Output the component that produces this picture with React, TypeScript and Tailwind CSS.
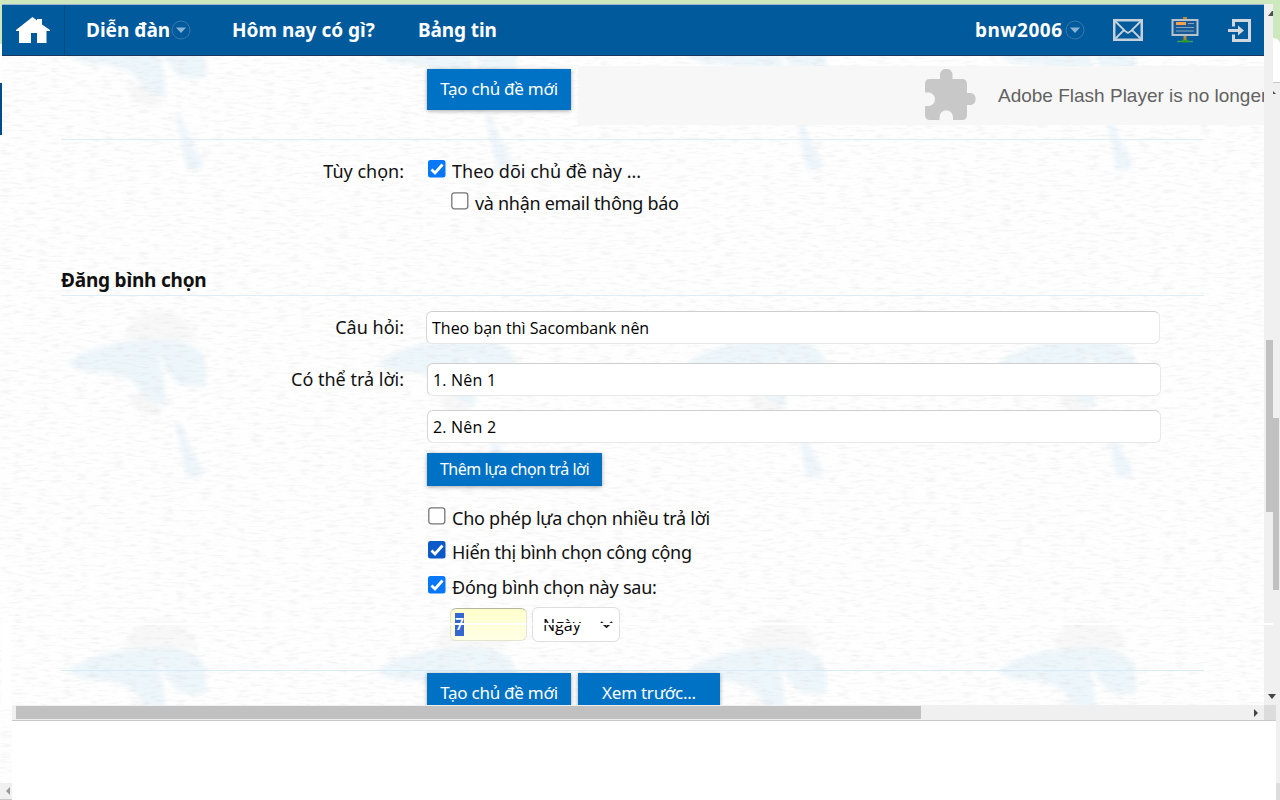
import type { ReactNode } from 'react';

function PaperBackground() {
  return (
    <svg className="absolute inset-0 h-[800px] w-[1280px]" viewBox="0 0 1280 800">
      <defs>
        <filter id="soft" x="-10%" y="-10%" width="120%" height="120%">
          <feGaussianBlur stdDeviation="2" />
        </filter>
        <filter id="paper" x="0" y="0" width="100%" height="100%">
          <feTurbulence type="fractalNoise" baseFrequency="0.08 0.4" numOctaves="3" seed="8" />
          <feColorMatrix values="0 0 0 0 0.5  0 0 0 0 0.5  0 0 0 0 0.5  0.45 0 0 0 -0.22" />
        </filter>
        <pattern id="logo" x="2" y="0" width="310" height="308" patternUnits="userSpaceOnUse">
          <g filter="url(#soft)">
            <path d="M122 32C126 14 139 4 158 3C178 4 191 14 194 32Z" fill="#f8f8f8" />
            <path d="M127 88C134 80 150 84 160 104C148 110 130 106 127 88Z" fill="#f7f7f7" />
            <path d="M66 55C82 40 120 32 150 32C190 29 205 44 204 60V77C196 79 184 79 176 75C168 68 162 56 157 45C158 56 163 68 164 98C155 97 144 92 138 82C130 70 115 66 98 64C84 65 72 61 66 55Z" fill="#edf6fa" />
            <path d="M172 114L179 114C184 134 196 152 202 163L198 170L185 170C180 152 178 132 172 114Z" fill="#eff6fb" />
          </g>
        </pattern>
      </defs>
      <rect width="1280" height="800" fill="#fefefe" />
      <rect width="1280" height="800" fill="url(#logo)" />
      <rect width="1280" height="800" filter="url(#paper)" />
    </svg>
  );
}

function MenuArrow() {
  return (
    <svg className="h-5 w-5 shrink-0" viewBox="0 0 20 20">
      <circle cx="10" cy="10" r="9" fill="none" stroke="#3a78ae" />
      <path d="M5 7.5H15L10 13Z" fill="#8db3d3" />
    </svg>
  );
}

interface CheckProps {
  checked?: boolean;
  dark?: boolean;
  children: ReactNode;
  className?: string;
}

function Check({ checked, dark, children, className = '' }: CheckProps) {
  return (
    <label className={`flex items-start whitespace-nowrap text-[18px] leading-6 ${className}`}>
      <svg className="mr-[6px] ml-px h-[18px] w-[18px] shrink-0" viewBox="0 0 18 18">
        {checked ? (
          <>
            <rect width="17.5" height="17.5" rx="2.5" fill={dark ? '#0a59c8' : '#0877f8'} />
            <path d="M3.5 9.5L7 13L14.5 4.5" fill="none" stroke="white" strokeWidth="2.8" />
          </>
        ) : (
          <rect x="0.8" y="0.8" width="16" height="16" rx="2.5" fill="white" stroke="#767676" strokeWidth="1.3" />
        )}
      </svg>
      <span className="-mt-px">{children}</span>
    </label>
  );
}

function Field({ children, className = '' }: { children: ReactNode; className?: string }) {
  return (
    <div
      className={`flex h-[33px] w-[734px] items-center rounded-md border border-[#e8e8e8] border-t-[#cfcfcf] border-l-[#d6d6d6] bg-white font-['Open_Sans',sans-serif] text-[16px] text-black ${className}`}
    >
      {children}
    </div>
  );
}

function Button({ children, className = '' }: { children: ReactNode; className?: string }) {
  return (
    <button
      className={`flex shrink-0 items-center justify-center whitespace-nowrap bg-[#0072c6] pb-px text-white shadow-[0_1px_4px_rgba(0,0,0,0.35)] ${className}`}
    >
      {children}
    </button>
  );
}

function Row({ label, children, className = '' }: { label?: ReactNode; children: ReactNode; className?: string }) {
  return (
    <div className={`flex shrink-0 ${className}`}>
      <div className="mr-[23px] w-[402px] shrink-0 whitespace-nowrap text-right text-[18px] leading-[33px]">{label}</div>
      {children}
    </div>
  );
}

function Header() {
  return (
    <header className="flex h-[52px] shrink-0 items-center border-t border-b border-t-[#9ab5d1] border-b-[#18395d] bg-[#005a9c] text-[19px] leading-[26px] font-bold text-white">
      <div className="flex h-full w-[63px] shrink-0 items-center border-r border-[#0a4b80] pl-[14px]">
        <svg className="h-[28px] w-[34px]" viewBox="0 0 34 28">
          <path d="M0 14L16.5 1L21 4.5V3H26V8.5L34 14V15H30.5V27H21V17H15V27H3V15H0Z" fill="white" />
        </svg>
      </div>
      <span className="mb-px ml-[21px] w-[85px] whitespace-nowrap">Diễn đàn</span>
      <MenuArrow />
      <span className="mb-px ml-[41px] w-[143px] whitespace-nowrap">Hôm nay có gì?</span>
      <span className="mb-px ml-[43px] whitespace-nowrap tracking-[-0.1px]">Bảng tin</span>
      <span className="mb-px ml-auto w-[90px] whitespace-nowrap tracking-[0.5px]">bnw2006</span>
      <MenuArrow />
      <svg className="ml-[28px] h-[22px] w-[30px]" viewBox="0 0 30 22" fill="none" stroke="#c6d0da" strokeWidth="2">
        <path d="M1 1H29V21H1Z" strokeWidth="3" />
        <path d="M2 2L12 12L15 14L18 12L28 2M2 20L11 11M28 20L19 11" strokeWidth="1.8" />
      </svg>
      <svg className="ml-[28px] h-[28px] w-[28px]" viewBox="0 0 28 28">
        <path d="M12 1H16V4H12ZM12.5 19H15.5V25H12.5Z" fill="#b98b2e" />
        <path d="M6 25.5H22" stroke="#3d9b5c" strokeWidth="1.5" />
        <path d="M11 25H17" stroke="#2f9c1f" strokeWidth="2.5" />
        <rect x="1.5" y="4" width="25" height="15" fill="#175a94" stroke="#b6c2cd" strokeWidth="2" />
        <path d="M5 7.5H15" stroke="#f59f50" strokeWidth="3" />
        <path d="M17 7.5H23M5 11.5H23M5 15H23" stroke="#7fa2c2" />
      </svg>
      <svg className="mr-[12px] ml-[28px] h-[25px] w-[25px]" viewBox="0 0 25 25" fill="none" stroke="#d2d7dd" strokeWidth="3">
        <path d="M6.5 8.5V2.5H22.5V22.5H6.5V16.5" />
        <path d="M1 12.5H12" />
        <path d="M11 7.5L17 12.5L11 17.5Z" fill="#d2d7dd" stroke="none" />
      </svg>
    </header>
  );
}

function FlashNotice() {
  return (
    <div className="ml-[7px] flex h-[59px] min-w-0 flex-1 items-center overflow-hidden bg-[#f7f7f7] pl-[347px]">
      <svg className="mb-px h-[52px] w-[52px] shrink-0" viewBox="0 0 52 52">
        <path
          d="M5 10H15V6A6.2 6.2 0 0 1 27.5 6V10H37Q42 10 42 15V24H46A6.2 6.2 0 0 1 46 36H42V46Q42 51 37 51H28V48A6.7 6.7 0 0 0 14.5 48V51H5Q0 51 0 46V37H4A6.8 6.8 0 0 0 4 23.5H0V15Q0 10 5 10Z"
          fill="#c8c8c8"
        />
      </svg>
      <span className="mt-[2px] ml-[21px] whitespace-nowrap font-['Liberation_Sans',sans-serif] text-[19px] text-[#626262]">
        Adobe Flash Player is no longer
      </span>
    </div>
  );
}

function PollForm() {
  return (
    <main className="flex h-[649px] flex-col overflow-hidden">
      <Row className="h-[83px] pt-[10px]">
        <Button className="mt-[3px] h-[41px] w-[144px] text-[17px] tracking-[-0.25px]">Tạo chủ đề mới</Button>
        <FlashNotice />
      </Row>
      <div className="ml-[59px] h-px w-[1143px] shrink-0 bg-[#dfedf5]" />
      <Row label="Tùy chọn:" className="mt-[15px] h-[110px]">
        <div className="flex flex-col pt-[5px]">
          <Check checked className="h-[32px]">Theo dõi chủ đề này ...</Check>
          <Check className="ml-[23px] tracking-[-0.3px]">và nhận email thông báo</Check>
        </div>
      </Row>
      <h2 className="ml-[59px] h-[31px] w-[1143px] shrink-0 border-b border-[#dfedf5] text-[19px] leading-[31px] font-bold tracking-[-0.2px]">
        Đăng bình chọn
      </h2>
      <Row label="Câu hỏi:" className="mt-[15px]">
        <Field className="mb-px -ml-px pl-[5px]">Theo bạn thì Sacombank nên</Field>
      </Row>
      <Row label="Có thể trả lời:" className="mt-[18px]">
        <div className="flex flex-col">
          <Field className="pl-[5px] tracking-[0.2px]">1. Nên 1</Field>
          <Field className="mt-[14px] pl-[5px] tracking-[0.2px]">2. Nên 2</Field>
          <Button className="mt-[10px] h-[33px] w-[175px] text-[16px] tracking-[-0.5px]">Thêm lựa chọn trả lời</Button>
          <Check className="mt-[21px] h-[34px] tracking-[-0.25px]">Cho phép lựa chọn nhiều trả lời</Check>
          <Check checked dark className="h-[35px] tracking-[-0.3px]">Hiển thị bình chọn công cộng</Check>
          <Check checked className="h-[31px] tracking-[-0.22px]">Đóng bình chọn này sau:</Check>
          <div className="ml-[23px] flex items-center gap-[5px] font-['Open_Sans',sans-serif] text-[16px]">
            <div className="flex h-[33px] w-[77px] items-center rounded-md border border-[#e4e4d0] border-t-[#b5b5a5] bg-gradient-to-b from-[#ffffcc] to-[#ffffe5] pl-[4px]">
              <span className="h-[23px] bg-[#3367d1] leading-[23px] font-semibold text-white">7</span>
            </div>
            <div className="flex h-[35px] w-[88px] items-center justify-between rounded-md border border-[#dedede] bg-white pr-[6px] pl-[10px] text-black">
              Ngày
              <svg className="h-[8px] w-[13px]" viewBox="0 0 13 8">
                <path d="M1 1L6.5 6L12 1" fill="none" stroke="#222" strokeWidth="2" />
              </svg>
            </div>
          </div>
        </div>
      </Row>
      <div className="mt-[28px] ml-[59px] h-px w-[1143px] shrink-0 bg-[#d8ebf8]" />
      <Row className="mt-[2px]">
        <Button className="h-[41px] w-[144px] text-[17px] tracking-[-0.25px]">Tạo chủ đề mới</Button>
        <Button className="ml-[7px] h-[41px] w-[142px] text-[17px] tracking-[-0.25px]">Xem trước...</Button>
      </Row>
    </main>
  );
}

function VerticalScrollbars() {
  return (
    <div className="flex w-[16px] shrink-0">
      <div className="w-[9px] bg-[#f0f0f0]">
        <svg className="mt-[7px] ml-[4px] block h-[5px] w-[5px]" viewBox="0 0 5 5">
          <path d="M0 5L4 0H5V5Z" fill="#505050" />
        </svg>
        <div className="mt-[324px] ml-[2px] h-[172px] bg-[#c1c1c1]" />
      </div>
      <div className="w-[7px] bg-[#f0f0f0]">
        <div className="h-[34px] bg-[#cce8bc]" />
        <div className="h-[45px] border-b border-[#c8c8c8] bg-[#cce8bc]">
          <div className="h-full rounded-tr-[6px] bg-white" />
        </div>
        <svg className="mt-[8px] block h-[3px] w-[3px]" viewBox="0 0 3 3">
          <path d="M0 0L3 3H0Z" fill="#505050" />
        </svg>
        <div className="mt-[324px] mr-px h-[172px] bg-[#c1c1c1]" />
      </div>
    </div>
  );
}

export default function App() {
  return (
    <div className="relative h-[800px] w-[1280px] overflow-hidden font-['Noto_Sans',sans-serif] text-[#111]">
      <PaperBackground />
      <div className="relative flex h-full flex-col">
        <div className="h-[4px] shrink-0 bg-[#cce8bc]" />
        <div className="flex h-[701px] shrink-0">
          <div className="flex w-[2px] shrink-0 flex-col">
            <div className="h-[40px] bg-[#cce8bc]" />
            <div className="h-[39px] bg-white" />
            <div className="h-[52px] bg-[#004b8c]" />
          </div>
          <div className="w-[1262px] shrink-0">
            <Header />
            <PollForm />
          </div>
          <VerticalScrollbars />
        </div>
        <div className="flex h-[95px]">
          <div className="flex w-[12px] shrink-0 flex-col">
            <div className="h-[78px]" />
            <div className="flex h-[17px] items-center justify-end border-b border-[#c8c8c8] bg-[#f0f0f0] pr-[2px]">
              <svg className="h-[8px] w-[4px]" viewBox="0 0 4 8">
                <path d="M4 0V8L0 4Z" fill="#999" />
              </svg>
            </div>
          </div>
          <div className="w-[1264px] bg-white">
            <div className="flex h-[16px] items-center border-b border-[#c9c9c9] bg-[#f0f0f0] pl-[4px]">
              <div className="h-[13px] w-[905px] bg-[#c1c1c1]" />
              <svg className="ml-[333px] h-[8px] w-[4px]" viewBox="0 0 4 8">
                <path d="M0 0V8L4 4Z" fill="#444" />
              </svg>
              <div className="ml-auto h-[15px] w-[12px] bg-[#dcdcdc]" />
            </div>
          </div>
          <div className="flex w-[4px] flex-col bg-[#f0f0f0] pt-[78px]">
            <div className="h-[17px] bg-[#dcdcdc]" />
          </div>
        </div>
      </div>
      {/* thin seam across the form and its left gutter */}
      <div className="absolute top-[623px] left-[2px] h-[2px] w-[1271px] bg-white" />
      <div className="absolute top-[625px] left-[2px] h-[80px] w-[9px] bg-white" />
      <svg className="absolute top-[694px] left-[1268px] h-[5px] w-[8px]" viewBox="0 0 8 5">
        <path d="M0 0H8L4 5Z" fill="#444" />
      </svg>
    </div>
  );
}
